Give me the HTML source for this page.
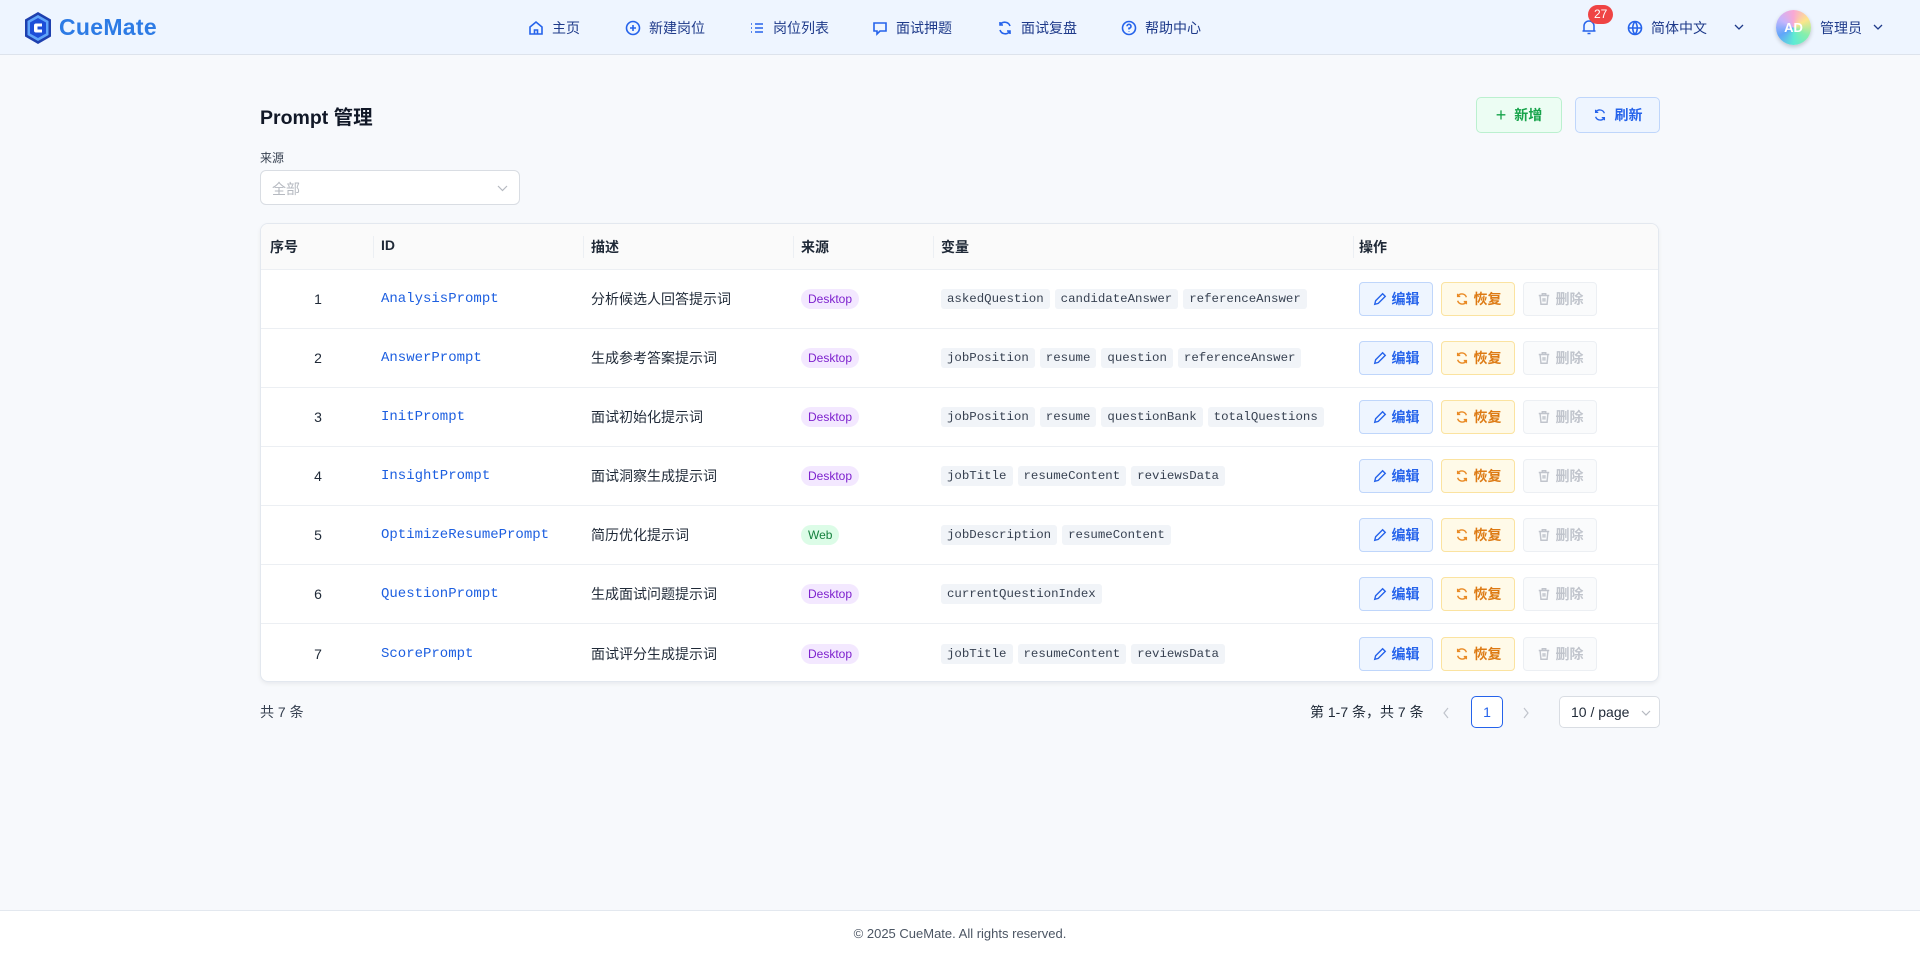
<!DOCTYPE html>
<html><head><meta charset="utf-8"><style>
*{box-sizing:border-box;margin:0;padding:0}
body{width:1920px;height:958px;background:#f7f9fc;font-family:"Liberation Sans","Noto Sans CJK SC",sans-serif;font-size:14px;color:#1f2937;position:relative;overflow:hidden}
.hdr{position:absolute;left:0;top:0;width:1920px;height:55px;background:#eef5ff;border-bottom:1px solid #dde3ec}
.abs{position:absolute}
.nav{position:absolute;top:18px;display:flex;align-items:center;gap:8px;color:#1e3a8a;font-size:14px}
.nav svg{width:16px;height:16px;stroke:#2563eb;fill:none;stroke-width:1.6}
.mono{font-family:"Liberation Mono","DejaVu Sans Mono",monospace}
.tbl{position:absolute;left:260px;top:223px;width:1399px;height:459px;background:#fff;border:1px solid #e3e8ef;border-radius:8px;overflow:hidden;box-shadow:0 2px 4px rgba(0,0,0,.06)}
.th{position:absolute;top:0;left:0;width:100%;height:46px;background:#fafafa;border-bottom:1px solid #eceff3}
.th span{position:absolute;top:13px;font-weight:bold;font-size:14px;color:#1f2937}
.th i{position:absolute;top:12px;width:1px;height:22px;background:#eceff3}
.row{position:absolute;left:0;width:100%;height:59px;border-bottom:1px solid #eceff3}
.row>*{position:absolute;top:50%;transform:translateY(-50%)}
.num{left:0;width:114px;text-align:center}
.id{left:120px;color:#1d5fe0;font-size:14px}
.desc{left:330px}
.src{left:540px;font-size:12px;padding:2px 7px;border-radius:10px;line-height:16px}
.dk{background:#f3e8ff;color:#7e22ce}
.wb{background:#dcfce7;color:#15803d}
.vars{left:680px;display:flex;gap:5px}
.vars span{background:#f1f4f8;color:#374151;font-size:12.4px;padding:2px 6px;border-radius:3px;line-height:16px;font-family:"Liberation Mono","DejaVu Sans Mono",monospace}
.btn{height:34px;width:74px;border-radius:4px;border:1px solid;display:flex;align-items:center;justify-content:center;gap:5px;font-weight:bold;font-size:14px}
.btn svg{width:14px;height:14px;fill:none;stroke-width:1.6}
.e{left:1098px;background:#eef5ff;border-color:#bfd6fb;color:#2563eb}
.e svg{stroke:#2563eb}
.r{left:1180px;background:#fffae8;border-color:#fbe3a0;color:#dd7a13}
.r svg{stroke:#e98a24}
.d{left:1262px;background:#fafbfc;border-color:#eceff3;color:#c0c4cc}
.d svg{stroke:#c0c4cc}
</style></head><body>
<div class="hdr">
 <svg class="abs" style="left:23px;top:11px" width="30" height="34" viewBox="0 0 30 34"><path d="M15 1 L28 8.5 V25.5 L15 33 L2 25.5 V8.5Z" fill="#1e40af"/><path d="M15 4 L25.5 10 V24 L15 30 L4.5 24 V10Z" fill="#60a5fa"/><path d="M15 7 L23 11.5 V22.5 L15 27 L7 22.5 V11.5Z" fill="#1d4ed8"/><path d="M19 12.5 H13 Q11 12.5 11 14.5 V19.5 Q11 21.5 13 21.5 H19 V18.5 H14.5 V15.5 H19Z" fill="#fff"/></svg>
 <div class="abs" style="left:59px;top:14px;font-size:23px;font-weight:bold;color:#2d7be5;letter-spacing:0.3px">CueMate</div>
 <div class="nav" style="left:528px"><svg viewBox="0 0 16 16"><path d="M2 7 L8 2 L14 7 V14 H2Z M6.5 14 V10 H9.5 V14"/></svg>主页</div>
 <div class="nav" style="left:625px"><svg viewBox="0 0 16 16"><circle cx="8" cy="8" r="6.5"/><path d="M8 5 V11 M5 8 H11"/></svg>新建岗位</div>
 <div class="nav" style="left:749px"><svg viewBox="0 0 16 16"><path d="M2 4 H3 M2 8 H3 M2 12 H3 M6 4 H14 M6 8 H14 M6 12 H14"/></svg>岗位列表</div>
 <div class="nav" style="left:872px"><svg viewBox="0 0 16 16"><path d="M2 3 H14 V11 H8 L5 14 V11 H2Z"/></svg>面试押题</div>
 <div class="nav" style="left:997px"><svg viewBox="0 0 16 16"><path d="M13 6 A5.5 5.5 0 0 0 3 5 M3 2 V5 H6 M3 10 A5.5 5.5 0 0 0 13 11 M13 14 V11 H10"/></svg>面试复盘</div>
 <div class="nav" style="left:1121px"><svg viewBox="0 0 16 16"><circle cx="8" cy="8" r="6.5"/><path d="M6 6.3 A2 2 0 1 1 8 8.3 V9.5 M8 11.5 V12"/></svg>帮助中心</div>
 <svg class="abs" style="left:1581px;top:18px" width="16" height="18" viewBox="0 0 16 18" fill="none" stroke="#2563eb" stroke-width="1.5"><path d="M3 13 V8 A5 5 0 0 1 13 8 V13 H3 M1.5 13 H14.5 M6.5 15.5 H9.5"/></svg>
 <div class="abs" style="left:1588px;top:5px;height:19px;padding:0 6px;border-radius:10px;background:#ef4444;color:#fff;font-size:12px;line-height:19px">27</div>
 <div class="nav" style="left:1627px"><svg viewBox="0 0 16 16"><circle cx="8" cy="8" r="6.5"/><path d="M1.5 8 H14.5 M8 1.5 C5 5 5 11 8 14.5 M8 1.5 C11 5 11 11 8 14.5"/></svg>简体中文</div>
 <svg class="abs" style="left:1734px;top:24px" width="10" height="7" viewBox="0 0 10 7" fill="none" stroke="#1e3a8a" stroke-width="1.3"><path d="M1 1 L5 5 L9 1"/></svg>
 <div class="abs" style="left:1776px;top:10px;width:35px;height:35px;border-radius:50%;background:conic-gradient(#f9a8d4,#fde68a,#86efac,#5eead4,#60a5fa,#c4b5fd,#f9a8d4);box-shadow:0 2px 4px rgba(0,0,0,.2);color:#fff;font-weight:bold;font-size:13px;line-height:35px;text-align:center">AD</div>
 <div class="abs" style="left:1820px;top:18px;color:#1e3a8a">管理员</div>
 <svg class="abs" style="left:1873px;top:24px" width="10" height="7" viewBox="0 0 10 7" fill="none" stroke="#1e3a8a" stroke-width="1.3"><path d="M1 1 L5 5 L9 1"/></svg>
</div>

<div class="abs" style="left:260px;top:101px;font-size:19.5px;font-weight:bold;color:#111827">Prompt 管理</div>
<div class="abs" style="left:1476px;top:97px;width:86px;height:36px;border:1px solid #bbf0cf;background:#ecfdf3;border-radius:5px;color:#16a34a;font-weight:bold;display:flex;align-items:center;justify-content:center;gap:8px"><span style="font-size:18px;font-weight:normal">+</span>新增</div>
<div class="abs" style="left:1575px;top:97px;width:85px;height:36px;border:1px solid #bfd6fb;background:#eef5ff;border-radius:5px;color:#2563eb;font-weight:bold;display:flex;align-items:center;justify-content:center;gap:8px"><svg width="14" height="14" viewBox="0 0 16 16" fill="none" stroke="#2563eb" stroke-width="1.5"><path d="M13 6 A5.5 5.5 0 0 0 3 5 M3 2 V5 H6 M3 10 A5.5 5.5 0 0 0 13 11 M13 14 V11 H10"/></svg>刷新</div>
<div class="abs" style="left:260px;top:149px;font-size:12px;color:#374151">来源</div>
<div class="abs" style="left:260px;top:170px;width:260px;height:35px;background:#fff;border:1px solid #d9dde3;border-radius:6px;color:#b5b9c0;padding:8px 11px">全部<svg class="abs" style="right:11px;top:14px" width="11" height="7" viewBox="0 0 11 7" fill="none" stroke="#b5b9c0" stroke-width="1.2"><path d="M1 1 L5.5 5.5 L10 1"/></svg></div>

<div class="tbl">
 <div class="th"><span style="left:9px">序号</span><i style="left:112px"></i><span style="left:120px">ID</span><i style="left:322px"></i><span style="left:330px">描述</span><i style="left:532px"></i><span style="left:540px">来源</span><i style="left:672px"></i><span style="left:680px">变量</span><i style="left:1092px"></i><span style="left:1098px">操作</span></div>
 <div class="row" style="top:46px"><span class="num">1</span><span class="id mono">AnalysisPrompt</span><span class="desc">分析候选人回答提示词</span><span class="src dk">Desktop</span><div class="vars"><span>askedQuestion</span><span>candidateAnswer</span><span>referenceAnswer</span></div>EDIT</div>
 <div class="row" style="top:105px"><span class="num">2</span><span class="id mono">AnswerPrompt</span><span class="desc">生成参考答案提示词</span><span class="src dk">Desktop</span><div class="vars"><span>jobPosition</span><span>resume</span><span>question</span><span>referenceAnswer</span></div>EDIT</div>
 <div class="row" style="top:164px"><span class="num">3</span><span class="id mono">InitPrompt</span><span class="desc">面试初始化提示词</span><span class="src dk">Desktop</span><div class="vars"><span>jobPosition</span><span>resume</span><span>questionBank</span><span>totalQuestions</span></div>EDIT</div>
 <div class="row" style="top:223px"><span class="num">4</span><span class="id mono">InsightPrompt</span><span class="desc">面试洞察生成提示词</span><span class="src dk">Desktop</span><div class="vars"><span>jobTitle</span><span>resumeContent</span><span>reviewsData</span></div>EDIT</div>
 <div class="row" style="top:282px"><span class="num">5</span><span class="id mono">OptimizeResumePrompt</span><span class="desc">简历优化提示词</span><span class="src wb">Web</span><div class="vars"><span>jobDescription</span><span>resumeContent</span></div>EDIT</div>
 <div class="row" style="top:341px"><span class="num">6</span><span class="id mono">QuestionPrompt</span><span class="desc">生成面试问题提示词</span><span class="src dk">Desktop</span><div class="vars"><span>currentQuestionIndex</span></div>EDIT</div>
 <div class="row" style="top:400px;border-bottom:none"><span class="num">7</span><span class="id mono">ScorePrompt</span><span class="desc">面试评分生成提示词</span><span class="src dk">Desktop</span><div class="vars"><span>jobTitle</span><span>resumeContent</span><span>reviewsData</span></div>EDIT</div>
</div>

<div class="abs" style="left:260px;top:702px;color:#374151">共 7 条</div>
<div class="abs" style="left:1310px;top:702px;color:#1f2937">第 1-7 条，共 7 条</div>
<svg class="abs" style="left:1442px;top:707px" width="8" height="12" viewBox="0 0 8 12" fill="none" stroke="#c0c4cc" stroke-width="1.2"><path d="M6 1 L2 6 L6 11"/></svg>
<div class="abs" style="left:1471px;top:696px;width:32px;height:32px;border:1px solid #2563eb;border-radius:5px;background:#fff;color:#2563eb;text-align:center;line-height:30px">1</div>
<svg class="abs" style="left:1522px;top:707px" width="8" height="12" viewBox="0 0 8 12" fill="none" stroke="#c0c4cc" stroke-width="1.2"><path d="M2 1 L6 6 L2 11"/></svg>
<div class="abs" style="left:1559px;top:696px;width:101px;height:32px;border:1px solid #d9dde3;border-radius:5px;background:#fff;padding:7px 11px;color:#1f2937">10 / page<svg class="abs" style="right:8px;top:13px" width="10" height="6" viewBox="0 0 10 6" fill="none" stroke="#b5b9c0" stroke-width="1.2"><path d="M1 1 L5 5 L9 1"/></svg></div>

<div class="abs" style="left:0;top:910px;width:1920px;height:48px;background:#fff;border-top:1px solid #e3e8ef;text-align:center;padding-top:15px;font-size:13px;color:#4b5563">© 2025 CueMate. All rights reserved.</div>

<script>
var E='<div class="btn e"><svg viewBox="0 0 16 16"><path d="M2 14 L3 10 L11 2 L14 5 L6 13Z"/></svg>编辑</div><div class="btn r"><svg viewBox="0 0 16 16"><path d="M13 6 A5.5 5.5 0 0 0 3 5 M3 2 V5 H6 M3 10 A5.5 5.5 0 0 0 13 11 M13 14 V11 H10"/></svg>恢复</div><div class="btn d"><svg viewBox="0 0 16 16"><path d="M2 4 H14 M6 4 V2 H10 V4 M3.5 4 L4.5 14 H11.5 L12.5 4 M7 7 V11 M9 7 V11"/></svg>删除</div>';
document.querySelectorAll('.row').forEach(function(r){r.innerHTML=r.innerHTML.replace('EDIT',E);});
</script>
</body></html>
